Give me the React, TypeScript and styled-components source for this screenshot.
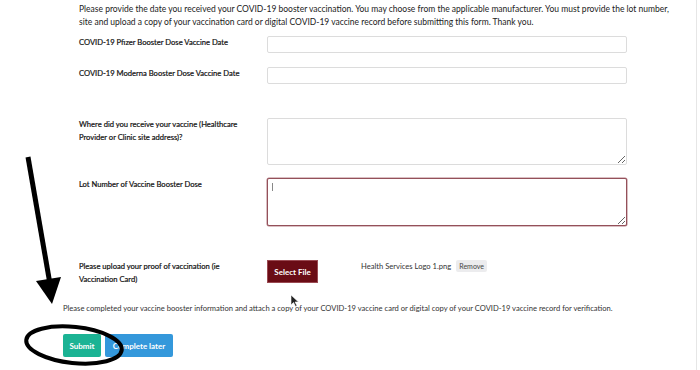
import styled, { createGlobalStyle } from 'styled-components';

const GlobalStyle = createGlobalStyle`
  html, body {
    margin: 0;
    padding: 0;
    background: #ffffff;
  }
  body {
    font-family: Lato, "Open Sans", sans-serif;
    color: #222;
  }
`;

const Page = styled.div`
  position: relative;
  width: 697px;
  height: 370px;
  box-sizing: border-box;
  border-right: 1px solid #e6e6e6;
  overflow: hidden;
`;

const Form = styled.div`
  padding: 3px 0 0 79px;
`;

const Intro = styled.p`
  margin: 0;
  font-size: 8.5px;
  line-height: 13px;
  color: #222;
`;

const Row = styled.div<{ $top: number }>`
  display: grid;
  grid-template-columns: 188px 360px;
  align-items: start;
  margin-top: ${(p) => p.$top}px;
`;

const Label = styled.label`
  font-size: 7.6px;
  font-weight: 400;
  line-height: 13px;
  color: #111;
  -webkit-text-stroke: 0.2px #111;
`;

const TextInput = styled.input`
  box-sizing: border-box;
  width: 360px;
  height: 17px;
  margin: 0;
  border: 1px solid #dcdcdc;
  border-radius: 2px;
  background: #fff;
  outline: none;
`;

const AreaWrap = styled.div<{ $h: number }>`
  position: relative;
  height: ${(p) => p.$h}px;
`;

const TextArea = styled.textarea<{ $active?: boolean }>`
  box-sizing: border-box;
  display: block;
  width: 360px;
  height: 100%;
  margin: 0;
  border: 1px solid ${(p) => (p.$active ? '#94505a' : '#dcdcdc')};
  box-shadow: ${(p) => (p.$active ? '0 0 0 0.5px #b58088' : 'none')};
  border-radius: 2px;
  background: #fff;
  outline: none;
  resize: vertical;
`;

const Caret = styled.span`
  position: absolute;
  left: 5px;
  top: 5px;
  width: 1px;
  height: 8px;
  background: #888;
`;

const FileArea = styled.div`
  display: flex;
  align-items: flex-start;
`;

const SelectButton = styled.button`
  box-sizing: border-box;
  width: 51px;
  height: 23px;
  margin: 0 43px 0 0;
  padding: 0;
  border: 1px solid #9a4a52;
  background: #6a0c15;
  color: #fff;
  font-family: Lato, sans-serif;
  font-size: 8px;
  font-weight: 700;
`;

const FileName = styled.span`
  font-size: 7.6px;
  line-height: 12px;
  color: #333;
  margin-right: 5px;
`;

const RemoveButton = styled.button`
  box-sizing: border-box;
  height: 12px;
  padding: 0 3px;
  margin: 0;
  border: none;
  border-radius: 2px;
  background: #ececee;
  color: #444;
  font-family: Lato, sans-serif;
  font-size: 7px;
`;

const Footer = styled.div`
  padding: 16px 0 0 63px;
`;

const Note = styled.p`
  margin: 0;
  font-size: 7.6px;
  line-height: 12px;
  color: #333;
`;

const Actions = styled.div`
  display: flex;
  gap: 4px;
  margin-top: 20px;
`;

const ActionButton = styled.button<{ $color: string; $w: number }>`
  box-sizing: border-box;
  width: ${(p) => p.$w}px;
  height: 23px;
  margin: 0;
  padding: 0;
  border: none;
  border-radius: 2px;
  background: ${(p) => p.$color};
  color: #fff;
  font-family: Lato, sans-serif;
  font-size: 8px;
  font-weight: 700;
`;

const Overlay = styled.svg`
  position: absolute;
  left: 0;
  top: 0;
  pointer-events: none;
`;

export default function App() {
  return (
    <>
      <GlobalStyle />
      <Page>
        <Form>
          <Intro>
            Please provide the date you received your COVID-19 booster vaccination. You may choose from the applicable
            manufacturer. You must provide the lot number,
            <br />
            site and upload a copy of your vaccination card or digital COVID-19 vaccine record before submitting this
            form. Thank you.
          </Intro>

          <Row $top={7}>
            <Label>COVID-19 Pfizer Booster Dose Vaccine Date</Label>
            <TextInput />
          </Row>

          <Row $top={14}>
            <Label>COVID-19 Moderna Booster Dose Vaccine Date</Label>
            <TextInput />
          </Row>

          <Row $top={34}>
            <Label>
              Where did you receive your vaccine (Healthcare
              <br />
              Provider or Clinic site address)?
            </Label>
            <AreaWrap $h={47}>
              <TextArea />
            </AreaWrap>
          </Row>

          <Row $top={13}>
            <Label>Lot Number of Vaccine Booster Dose</Label>
            <AreaWrap $h={48}>
              <TextArea $active />
              <Caret />
            </AreaWrap>
          </Row>

          <Row $top={34}>
            <Label>
              Please upload your proof of vaccination (ie
              <br />
              Vaccination Card)
            </Label>
            <FileArea>
              <SelectButton>Select File</SelectButton>
              <FileName>Health Services Logo 1.png</FileName>
              <RemoveButton>Remove</RemoveButton>
            </FileArea>
          </Row>
        </Form>

        <Footer>
          <Note>
            Please completed your vaccine booster information and attach a copy of your COVID-19 vaccine card or
            digital copy of your COVID-19 vaccine record for verification.
          </Note>
          <Actions>
            <ActionButton $color="#1bb394" $w={38}>
              Submit
            </ActionButton>
            <ActionButton $color="#3498db" $w={68}>
              Complete later
            </ActionButton>
          </Actions>
        </Footer>

        {/* annotation drawn over the form */}
        <Overlay width="697" height="370" viewBox="0 0 697 370">
          <line x1="28" y1="157" x2="50" y2="284" stroke="#000" strokeWidth="5" />
          <polygon points="36,281 61,277 52,304" fill="#000" />
          <ellipse
            cx="74"
            cy="345"
            rx="48"
            ry="18"
            fill="none"
            stroke="#000"
            strokeWidth="4"
            transform="rotate(6 74 345)"
          />
          <path d="M291 295 L291 305 L293.5 302.5 L295.5 306.5 L297 305.8 L295 302 L298.5 302 Z" fill="#222" stroke="#fff" strokeWidth="0.6" />
        </Overlay>
      </Page>
    </>
  );
}
